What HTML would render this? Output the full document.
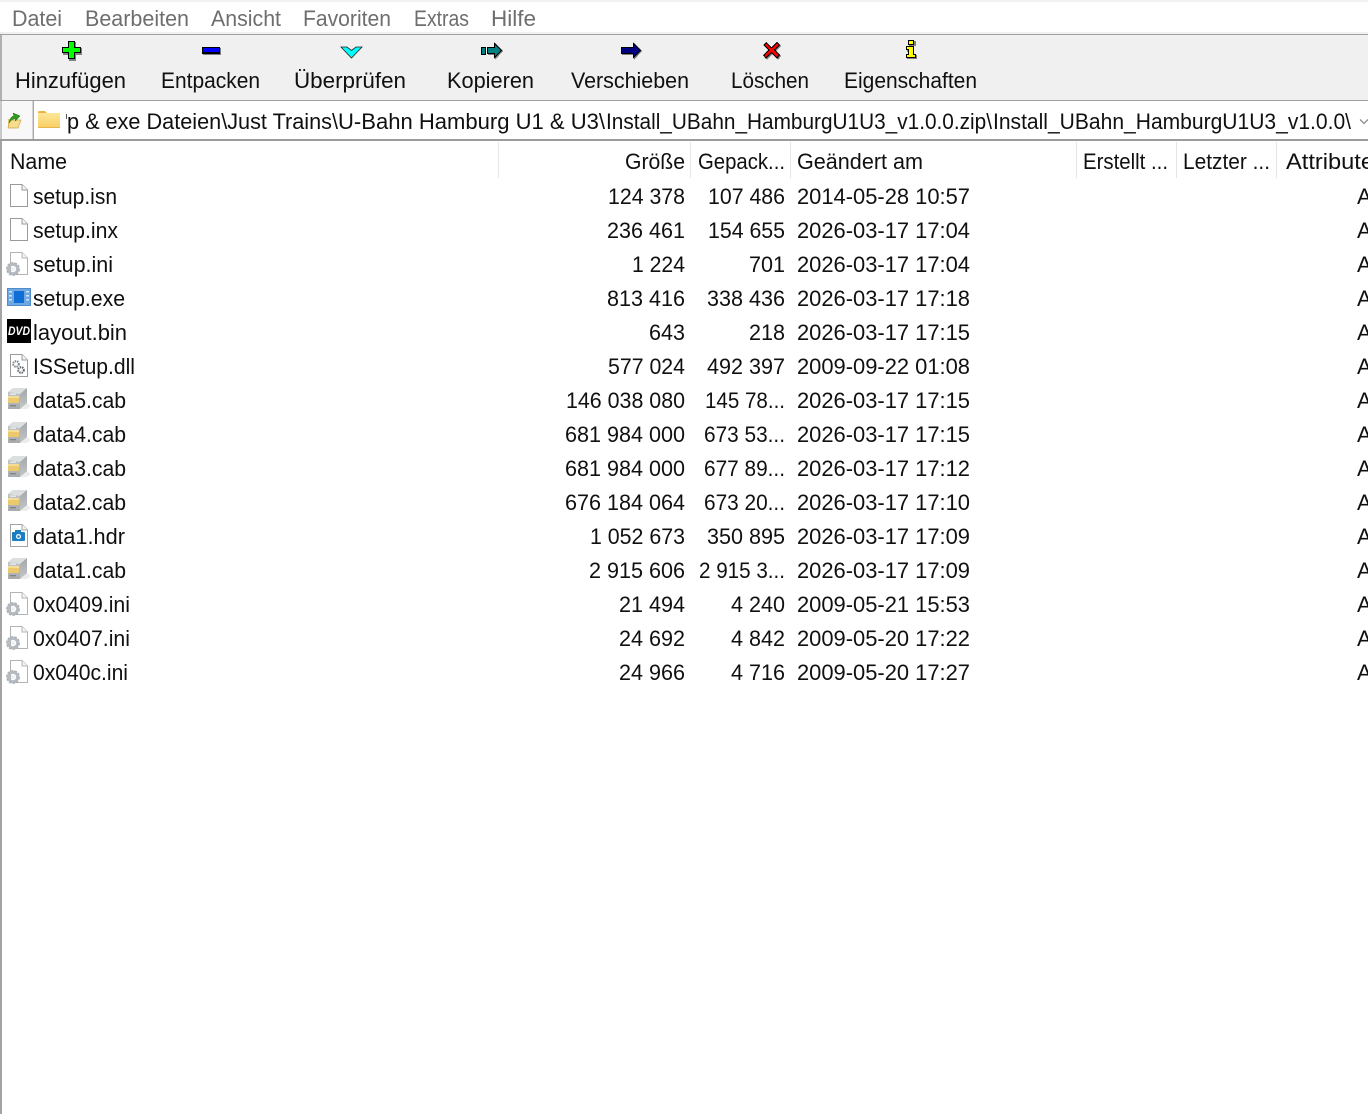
<!DOCTYPE html>
<html><head><meta charset="utf-8"><title>Datei</title>
<style>
html,body{margin:0;padding:0;background:#fff;width:1368px;height:1114px;overflow:hidden}
svg{display:block}
text{font-family:"Liberation Sans",sans-serif;font-size:22px;fill:#101010}
.m text{fill:#6e6e6e}
</style></head><body>
<svg width="1368" height="1114" viewBox="0 0 1368 1114" xmlns="http://www.w3.org/2000/svg">
<defs>
<linearGradient id="cabf" x1="0" y1="0" x2="0" y2="1"><stop offset="0" stop-color="#c9cccd"/><stop offset="1" stop-color="#a7abad"/></linearGradient>
<linearGradient id="cabs" x1="0" y1="0" x2="0" y2="1"><stop offset="0" stop-color="#a3a7a9"/><stop offset="1" stop-color="#c4c7c8"/></linearGradient>
<linearGradient id="fold" x1="0" y1="0" x2="0" y2="1"><stop offset="0" stop-color="#fde79a"/><stop offset="1" stop-color="#f8cf62"/></linearGradient>
<g id="page"><path d="M10.5 4.5H22l5.5 5.5V26.5H10.5Z" fill="#fff" stroke="#9a9a9a"/><path d="M22 4.5V10H27.5" fill="#f4f4f4" stroke="#9a9a9a"/></g>
<g id="gear"><circle cx="13" cy="21" r="5.200" fill="none" stroke="#a6adb3" stroke-width="3.400" stroke-dasharray="2.200 1"/><circle cx="13" cy="21" r="4.600" fill="none" stroke="#b4babf" stroke-width="2.800"/><circle cx="13" cy="21" r="2" fill="#eef0f1"/></g>
<g id="ini"><path d="M10.5 4.500H22l5.500 5.500V26.500H10.500Z" fill="#fff" stroke="#b4b4b4"/><path d="M22 4.500V10H27.500" fill="#f4f4f4" stroke="#b4b4b4"/><use href="#gear"/></g>
<g id="cab">
<path d="M21 28 27 22 31 25 27 28Z" fill="#ececec"/>
<path d="M8 11 13 7H27V22L20 28H8Z" fill="url(#cabf)"/>
<path d="M20 13 27 7V22L20 28Z" fill="url(#cabs)"/>
<path d="M8 11 13 7H27L20 13Z" fill="#dcdfe0"/>
<rect x="8" y="15" width="11" height="7" fill="#ecc96c"/>
<rect x="8" y="15" width="11" height="2" fill="#f4dd94"/>
<rect x="10" y="12.500" width="6" height="1.300" fill="#eeeeee"/>
<rect x="10" y="24" width="6" height="1.300" fill="#7f8386"/>
</g>
</defs>

<!-- menu -->
<rect x="0" y="0" width="1368" height="2" fill="#f2f2f2"/>
<rect x="0" y="32" width="1368" height="2" fill="#f0f0f0"/>
<rect x="0" y="34" width="1368" height="1" fill="#a0a0a0"/>
<g class="m">
<text x="12" y="26" textLength="50" lengthAdjust="spacingAndGlyphs">Datei</text>
<text x="85" y="26" textLength="104" lengthAdjust="spacingAndGlyphs">Bearbeiten</text>
<text x="211" y="26" textLength="70" lengthAdjust="spacingAndGlyphs">Ansicht</text>
<text x="303" y="26" textLength="88" lengthAdjust="spacingAndGlyphs">Favoriten</text>
<text x="414" y="26" textLength="55" lengthAdjust="spacingAndGlyphs">Extras</text>
<text x="491" y="26" textLength="45" lengthAdjust="spacingAndGlyphs">Hilfe</text>
</g>

<!-- toolbar -->
<rect x="0" y="35" width="1368" height="66" fill="#f0f0f0"/>
<rect x="0" y="35" width="2" height="66" fill="#b0b0b0"/>
<rect x="0" y="100" width="1368" height="1" fill="#a0a0a0"/>

<g shape-rendering="crispEdges">
<!-- plus -->
<path d="M69 42h7v6h6v7h-6v6h-7v-6h-6v-7h6Z" fill="#808080"/>
<path d="M68 41h7v6h6v6h-6v6h-7v-6h-6v-6h6Z" fill="#000"/>
<path d="M69 42h5v6h6v4h-6v6h-5v-6h-6v-4h6Z" fill="#00ff00"/>
<!-- minus -->
<rect x="203" y="48" width="18" height="7" fill="#808080"/>
<rect x="202" y="47" width="18" height="7" fill="#000"/>
<rect x="203" y="48" width="16" height="4" fill="#0000ff"/>
<!-- arrow copy -->
<rect x="481" y="47" width="5" height="8" fill="#000"/>
<rect x="482" y="48" width="3" height="6" fill="#008080"/>
<path d="M495 43 503 51 495 60V55H488V48H495Z" fill="#808080"/>
<path d="M494 42 502 50.500 494 59V54H487V47H494Z" fill="#000"/>
<path d="M495 44.500 500.500 50.500 495 56.500V53H488V48H495Z" fill="#008080"/>
<!-- arrow move -->
<path d="M634 43 642 51 634 60V55H622V48H634Z" fill="#808080"/>
<path d="M633 42 641 50.500 633 59V54H621V47H633Z" fill="#000"/>
<path d="M634 44.500 639.500 50.500 634 56.500V53H622V48H634Z" fill="#000080"/>
<!-- x -->
<path d="M767 43 772.500 48 778 43 781 46 776 51 781 56 778 60 772.500 54 767 60 764 56 769 51 764 46Z" fill="#808080"/>
<path d="M766 42 771.500 47 777 42 780 45 775 50 780 55 777 59 771.500 53 766 59 763 55 768 50 763 45Z" fill="#000"/>
<path d="M766 43.500 771.500 48.500 777 43.500 778.500 45 773.500 50 778.500 55 777 57.500 771.500 51.500 766 57.500 764.500 55 769.500 50 764.500 45Z" fill="#ff0000"/>
</g>
<!-- check -->
<path d="M341 47H347L351.500 50.500 356 47H362L351.500 58Z" fill="#00ffff" stroke="#222" stroke-width=".8"/>
<g shape-rendering="crispEdges">
<!-- i -->
<rect x="909" y="41" width="7" height="5" fill="#808080"/>
<path d="M907 48h7v7h3v4h-10v-4h2v-3h-2Z" fill="#808080"/>
<rect x="908" y="40" width="6" height="5" fill="#000"/>
<rect x="909" y="41" width="4" height="3" fill="#ffff00"/>
<path d="M906 46h8v8h2v4h-10v-4h2v-4h-2Z" fill="#000"/>
<path d="M907 47h6v8h2v2h-8v-2h2v-6h-2Z" fill="#ffff00"/>
</g>

<g>
<text x="15" y="88" textLength="111" lengthAdjust="spacingAndGlyphs">Hinzufügen</text>
<text x="161" y="88" textLength="99" lengthAdjust="spacingAndGlyphs">Entpacken</text>
<text x="294" y="88" textLength="112" lengthAdjust="spacingAndGlyphs">Überprüfen</text>
<text x="447" y="88" textLength="87" lengthAdjust="spacingAndGlyphs">Kopieren</text>
<text x="571" y="88" textLength="118" lengthAdjust="spacingAndGlyphs">Verschieben</text>
<text x="731" y="88" textLength="78" lengthAdjust="spacingAndGlyphs">Löschen</text>
<text x="844" y="88" textLength="133" lengthAdjust="spacingAndGlyphs">Eigenschaften</text>
</g>

<!-- address bar -->
<rect x="0" y="101" width="33" height="39" fill="#f8f8f8"/>
<rect x="0" y="101" width="2" height="39" fill="#c8c8c8"/>
<rect x="32" y="101" width="1" height="39" fill="#d4d4d4"/>
<rect x="33" y="101" width="1" height="39" fill="#a8a8a8"/>
<rect x="34" y="101" width="1334" height="38" fill="#fff"/>
<rect x="0" y="139" width="1368" height="2" fill="#9c9c9c"/>
<!-- up folder -->
<path d="M8 119 H12 L11 128 H8Z" fill="#e9c868"/>
<path d="M8 128 10 120H21L18 128Z" fill="#f6dc8c" stroke="#c9a84e" stroke-width=".7"/>
<path d="M9 123 C10 118 12 116 14 116 L13 113 20 116 15.500 121 15 118.500 C13 119 11 120 9 123Z" fill="#2f9a1c" stroke="#1f6e10" stroke-width=".5"/>
<!-- folder -->
<path d="M38 112.500Q38 111 39.500 111H45L47 113H38Z" fill="#eeb53e"/>
<rect x="38" y="113" width="22" height="15" fill="url(#fold)"/>
<rect x="38" y="127" width="22" height="1" fill="#e6b64c"/>
<rect x="66" y="114" width="1" height="5" fill="#555"/>
<text x="67" y="129" textLength="271" lengthAdjust="spacingAndGlyphs">p &amp; exe Dateien\Just Trains\</text>
<text x="338" y="129" textLength="267" lengthAdjust="spacingAndGlyphs">U-Bahn Hamburg U1 &amp; U3\</text>
<text x="606" y="129" textLength="386" lengthAdjust="spacingAndGlyphs">Install_UBahn_HamburgU1U3_v1.0.0.zip\</text>
<text x="993" y="129" textLength="358" lengthAdjust="spacingAndGlyphs">Install_UBahn_HamburgU1U3_v1.0.0\</text>
<path d="M1360 119.500 1364 123.500 1368 119.500" fill="none" stroke="#8c8c8c" stroke-width="1.300"/>

<!-- list frame -->
<rect x="0" y="141" width="2" height="973" fill="#a4a4a4"/>
<!-- header -->
<g fill="#e5e5e5">
<rect x="498" y="142" width="1" height="36"/>
<rect x="690" y="142" width="1" height="36"/>
<rect x="790" y="142" width="1" height="36"/>
<rect x="1076" y="142" width="1" height="36"/>
<rect x="1176" y="142" width="1" height="36"/>
<rect x="1276" y="142" width="1" height="36"/>
</g>
<text x="10" y="169" textLength="57" lengthAdjust="spacingAndGlyphs">Name</text>
<text x="625" y="169" textLength="60" lengthAdjust="spacingAndGlyphs">Größe</text>
<text x="698" y="169" textLength="87" lengthAdjust="spacingAndGlyphs">Gepack...</text>
<text x="797" y="169" textLength="126" lengthAdjust="spacingAndGlyphs">Geändert am</text>
<text x="1083" y="169" textLength="85" lengthAdjust="spacingAndGlyphs">Erstellt ...</text>
<text x="1183" y="169" textLength="87" lengthAdjust="spacingAndGlyphs">Letzter ...</text>
<text x="1286" y="169" textLength="88" lengthAdjust="spacingAndGlyphs">Attribute</text>

<!-- icons -->
<use href="#page" y="180"/>
<use href="#page" y="214"/>
<use href="#ini" y="248"/>
<g>
<rect x="7" y="288" width="24" height="18" fill="#6fa8e0"/>
<rect x="7.500" y="288.500" width="23" height="17" fill="none" stroke="#4f8cc8"/>
<rect x="14" y="291" width="10" height="12" fill="#0f6fd6"/>
<rect x="9" y="291" width="3" height="1.500" fill="#cfe4f8"/><rect x="9" y="295" width="3" height="1.500" fill="#cfe4f8"/><rect x="9" y="299" width="3" height="1.500" fill="#cfe4f8"/>
<rect x="26" y="291" width="3" height="1.500" fill="#cfe4f8"/><rect x="26" y="295" width="3" height="1.500" fill="#cfe4f8"/><rect x="26" y="299" width="3" height="1.500" fill="#cfe4f8"/>
</g>
<rect x="7" y="319" width="24" height="24" fill="#000"/>
<text x="8" y="335" textLength="22" lengthAdjust="spacingAndGlyphs" style="font-size:12px;font-weight:bold;font-style:italic;fill:#fff">DVD</text>
<g>
<use href="#page" y="350"/>
<circle cx="16" cy="364" r="2.800" fill="none" stroke="#7e868c" stroke-width="2" stroke-dasharray="1.500 .8"/>
<circle cx="21" cy="370" r="2.800" fill="none" stroke="#5f676d" stroke-width="2" stroke-dasharray="1.500 .8"/>
</g>
<use href="#cab" y="381"/>
<use href="#cab" y="415"/>
<use href="#cab" y="449"/>
<use href="#cab" y="483"/>
<g>
<use href="#page" y="520" style="opacity:.9"/>
<rect x="12" y="532" width="13" height="9" rx="1" fill="#1b7ec2"/>
<rect x="15" y="530" width="6" height="3" fill="#1b7ec2"/>
<circle cx="18.500" cy="536.500" r="2.500" fill="#fff"/>
<circle cx="18.500" cy="536.500" r="1.300" fill="#1b7ec2"/>
</g>
<use href="#cab" y="551"/>
<use href="#ini" y="588"/>
<use href="#ini" y="622"/>
<use href="#ini" y="656"/>

<!-- names -->
<text x="33" y="204" textLength="84" lengthAdjust="spacingAndGlyphs">setup.isn</text>
<text x="33" y="238" textLength="85" lengthAdjust="spacingAndGlyphs">setup.inx</text>
<text x="33" y="272" textLength="80" lengthAdjust="spacingAndGlyphs">setup.ini</text>
<text x="33" y="306" textLength="92" lengthAdjust="spacingAndGlyphs">setup.exe</text>
<text x="33" y="340" textLength="94" lengthAdjust="spacingAndGlyphs">layout.bin</text>
<text x="33" y="374" textLength="102" lengthAdjust="spacingAndGlyphs">ISSetup.dll</text>
<text x="33" y="408" textLength="93" lengthAdjust="spacingAndGlyphs">data5.cab</text>
<text x="33" y="442" textLength="93" lengthAdjust="spacingAndGlyphs">data4.cab</text>
<text x="33" y="476" textLength="93" lengthAdjust="spacingAndGlyphs">data3.cab</text>
<text x="33" y="510" textLength="93" lengthAdjust="spacingAndGlyphs">data2.cab</text>
<text x="33" y="544" textLength="92" lengthAdjust="spacingAndGlyphs">data1.hdr</text>
<text x="33" y="578" textLength="93" lengthAdjust="spacingAndGlyphs">data1.cab</text>
<text x="33" y="612" textLength="97" lengthAdjust="spacingAndGlyphs">0x0409.ini</text>
<text x="33" y="646" textLength="97" lengthAdjust="spacingAndGlyphs">0x0407.ini</text>
<text x="33" y="680" textLength="95" lengthAdjust="spacingAndGlyphs">0x040c.ini</text>

<!-- sizes -->
<text x="608" y="204" textLength="77" lengthAdjust="spacingAndGlyphs">124 378</text>
<text x="607" y="238" textLength="78" lengthAdjust="spacingAndGlyphs">236 461</text>
<text x="632" y="272" textLength="53" lengthAdjust="spacingAndGlyphs">1 224</text>
<text x="607" y="306" textLength="78" lengthAdjust="spacingAndGlyphs">813 416</text>
<text x="649" y="340" textLength="36" lengthAdjust="spacingAndGlyphs">643</text>
<text x="608" y="374" textLength="77" lengthAdjust="spacingAndGlyphs">577 024</text>
<text x="566" y="408" textLength="119" lengthAdjust="spacingAndGlyphs">146 038 080</text>
<text x="565" y="442" textLength="120" lengthAdjust="spacingAndGlyphs">681 984 000</text>
<text x="565" y="476" textLength="120" lengthAdjust="spacingAndGlyphs">681 984 000</text>
<text x="565" y="510" textLength="120" lengthAdjust="spacingAndGlyphs">676 184 064</text>
<text x="590" y="544" textLength="95" lengthAdjust="spacingAndGlyphs">1 052 673</text>
<text x="589" y="578" textLength="96" lengthAdjust="spacingAndGlyphs">2 915 606</text>
<text x="619" y="612" textLength="66" lengthAdjust="spacingAndGlyphs">21 494</text>
<text x="619" y="646" textLength="66" lengthAdjust="spacingAndGlyphs">24 692</text>
<text x="619" y="680" textLength="66" lengthAdjust="spacingAndGlyphs">24 966</text>

<!-- packed -->
<text x="708" y="204" textLength="77" lengthAdjust="spacingAndGlyphs">107 486</text>
<text x="708" y="238" textLength="77" lengthAdjust="spacingAndGlyphs">154 655</text>
<text x="749" y="272" textLength="36" lengthAdjust="spacingAndGlyphs">701</text>
<text x="707" y="306" textLength="78" lengthAdjust="spacingAndGlyphs">338 436</text>
<text x="749" y="340" textLength="36" lengthAdjust="spacingAndGlyphs">218</text>
<text x="707" y="374" textLength="78" lengthAdjust="spacingAndGlyphs">492 397</text>
<text x="705" y="408" textLength="80" lengthAdjust="spacingAndGlyphs">145 78...</text>
<text x="704" y="442" textLength="81" lengthAdjust="spacingAndGlyphs">673 53...</text>
<text x="704" y="476" textLength="81" lengthAdjust="spacingAndGlyphs">677 89...</text>
<text x="704" y="510" textLength="81" lengthAdjust="spacingAndGlyphs">673 20...</text>
<text x="707" y="544" textLength="78" lengthAdjust="spacingAndGlyphs">350 895</text>
<text x="699" y="578" textLength="86" lengthAdjust="spacingAndGlyphs">2 915 3...</text>
<text x="731" y="612" textLength="54" lengthAdjust="spacingAndGlyphs">4 240</text>
<text x="731" y="646" textLength="54" lengthAdjust="spacingAndGlyphs">4 842</text>
<text x="731" y="680" textLength="54" lengthAdjust="spacingAndGlyphs">4 716</text>

<!-- dates -->
<text x="797" y="204" textLength="173" lengthAdjust="spacingAndGlyphs">2014-05-28 10:57</text>
<text x="797" y="238" textLength="173" lengthAdjust="spacingAndGlyphs">2026-03-17 17:04</text>
<text x="797" y="272" textLength="173" lengthAdjust="spacingAndGlyphs">2026-03-17 17:04</text>
<text x="797" y="306" textLength="173" lengthAdjust="spacingAndGlyphs">2026-03-17 17:18</text>
<text x="797" y="340" textLength="173" lengthAdjust="spacingAndGlyphs">2026-03-17 17:15</text>
<text x="797" y="374" textLength="173" lengthAdjust="spacingAndGlyphs">2009-09-22 01:08</text>
<text x="797" y="408" textLength="173" lengthAdjust="spacingAndGlyphs">2026-03-17 17:15</text>
<text x="797" y="442" textLength="173" lengthAdjust="spacingAndGlyphs">2026-03-17 17:15</text>
<text x="797" y="476" textLength="173" lengthAdjust="spacingAndGlyphs">2026-03-17 17:12</text>
<text x="797" y="510" textLength="173" lengthAdjust="spacingAndGlyphs">2026-03-17 17:10</text>
<text x="797" y="544" textLength="173" lengthAdjust="spacingAndGlyphs">2026-03-17 17:09</text>
<text x="797" y="578" textLength="173" lengthAdjust="spacingAndGlyphs">2026-03-17 17:09</text>
<text x="797" y="612" textLength="173" lengthAdjust="spacingAndGlyphs">2009-05-21 15:53</text>
<text x="797" y="646" textLength="173" lengthAdjust="spacingAndGlyphs">2009-05-20 17:22</text>
<text x="797" y="680" textLength="173" lengthAdjust="spacingAndGlyphs">2009-05-20 17:27</text>

<!-- attributes -->
<text x="1357" y="204">A</text>
<text x="1357" y="238">A</text>
<text x="1357" y="272">A</text>
<text x="1357" y="306">A</text>
<text x="1357" y="340">A</text>
<text x="1357" y="374">A</text>
<text x="1357" y="408">A</text>
<text x="1357" y="442">A</text>
<text x="1357" y="476">A</text>
<text x="1357" y="510">A</text>
<text x="1357" y="544">A</text>
<text x="1357" y="578">A</text>
<text x="1357" y="612">A</text>
<text x="1357" y="646">A</text>
<text x="1357" y="680">A</text>
</svg>
</body></html>
